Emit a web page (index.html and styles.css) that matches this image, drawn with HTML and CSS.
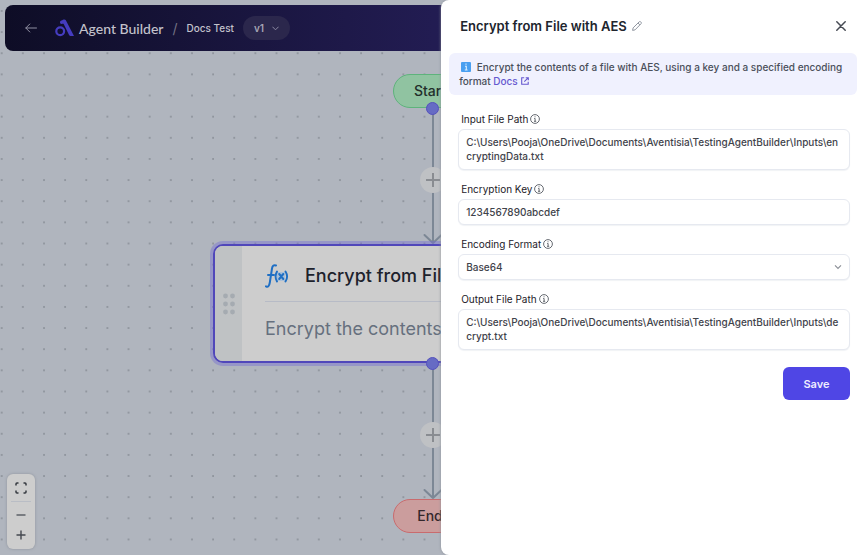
FILE: index.html
```html
<!DOCTYPE html>
<html lang="en">
<head>
<meta charset="utf-8">
<title>Agent Builder</title>
<meta name="viewport" content="width=device-width, initial-scale=1">
<link rel="stylesheet" href="styles.css">
</head>
<body>
<main class="canvas">
  <svg class="canvas-art" aria-hidden="true">
    <defs>
      <pattern id="dots" x="0.700" y="10" width="21.14" height="21.14" patternUnits="userSpaceOnUse">
        <circle cx="1" cy="1" r="0.9" fill="#858a93"/>
      </pattern>
    </defs>
    <rect width="100%" height="100%" fill="url(#dots)"/>
    <g fill="none" stroke="#7c8795" stroke-width="2" stroke-linecap="round" stroke-linejoin="round">
      <path d="M433 108V243M424.500 235L433 243L441.500 235"/>
      <path d="M433 363V498M424.500 490L433 498L441.500 490"/>
    </g>
    <g fill="#bfc1c4">
      <circle cx="433" cy="180" r="13"/>
      <circle cx="433" cy="435" r="13"/>
    </g>
    <path d="M426 180H440M433 173V187M426 435H440M433 428V442" stroke="#898c91" stroke-width="2"/>
  </svg>

  <div class="pill pill-start">Start</div>

  <article class="node">
    <div class="node-grip">
      <svg width="14" height="22" viewBox="0 0 14 22" fill="#a5abb1" aria-hidden="true">
        <circle cx="3.500" cy="3" r="2.400"/><circle cx="10.500" cy="3" r="2.400"/>
        <circle cx="3.500" cy="11" r="2.400"/><circle cx="10.500" cy="11" r="2.400"/>
        <circle cx="3.500" cy="19" r="2.400"/><circle cx="10.500" cy="19" r="2.400"/>
      </svg>
    </div>
    <div class="node-body">
      <div class="node-head">
        <svg width="24" height="24" viewBox="0 0 24 24" fill="none" stroke="#1f6fc4" stroke-linecap="round" aria-hidden="true">
          <rect x="12" y="8" width="8" height="9" fill="#a9c0d8" stroke="none"/>
          <path stroke-width="2" d="M11 1.500C8.500 .5 7.400 2 7 4.500L4.800 18.500C4.300 22 3 23.400 1 22.300M3 11H9"/>
          <path stroke-width="1.900" d="M12 7.500C10.300 10.500 10.300 14.500 12 17.500M20.500 7.500C22.400 10.500 22.400 14.500 20.500 17.500"/>
          <path stroke-width="2" d="M14.200 10L18.300 15M18.300 10L14.200 15"/>
        </svg>
        <h2>Encrypt from File with AES</h2>
      </div>
      <p>Encrypt the contents of a file with AES</p>
    </div>
  </article>

  <div class="pill pill-end">End</div>
  <span class="port port-start"></span>
  <span class="port port-node"></span>

  <div class="zoom-bar">
    <button type="button" aria-label="Fit view">
      <svg width="12" height="12" viewBox="0 0 12 12" fill="none" stroke="#34383f" stroke-width="1.500" aria-hidden="true"><path d="M1 3.500V2Q1 1 2 1H3.500M8.500 1H10Q11 1 11 2V3.500M11 8.500V10Q11 11 10 11H8.500M3.500 11H2Q1 11 1 10V8.500"/></svg>
    </button>
    <hr>
    <button type="button" aria-label="Zoom out">
      <svg width="10" height="10" viewBox="0 0 10 10" stroke="#555960" stroke-width="1.400" aria-hidden="true"><path d="M.5 5H9.500"/></svg>
    </button>
    <button type="button" aria-label="Zoom in">
      <svg width="10" height="10" viewBox="0 0 10 10" stroke="#44484f" stroke-width="1.400" aria-hidden="true"><path d="M.5 5H9.500M5 .5V9.500"/></svg>
    </button>
  </div>
</main>

<header class="topbar">
  <button type="button" class="back" aria-label="Back">
    <svg width="12" height="10" viewBox="0 0 12 10" fill="none" stroke="#8f8fa2" stroke-width="1" stroke-linecap="round" stroke-linejoin="round" aria-hidden="true"><path d="M11.500 5H.8M4.800 1L.8 5L4.800 9"/></svg>
  </button>
  <svg class="logo" width="20" height="18" viewBox="0 0 20 18" fill="none" aria-hidden="true">
    <circle cx="5.200" cy="12.200" r="3.900" stroke="#453cc0" stroke-width="2.200"/>
    <path fill="#453cc0" d="M5 3.300C5 1.700 6 1.300 7 1.400C7.600 .6 8.400 .5 9.300 .5C10.500 .5 11 1.300 11.500 2.500L19 17H16.200C15 17 14.400 16.600 13.800 15.400L8.800 5.200C8.300 4.400 7.500 5 6.700 5C5.500 5 5 4.400 5 3.300Z"/>
  </svg>
  <span class="brand">Agent Builder</span>
  <span class="slash">/</span>
  <span class="crumb">Docs Test</span>
  <button type="button" class="version">v1
    <svg width="7" height="5" viewBox="0 0 7 5" fill="none" stroke="#8d8aa3" stroke-linecap="round" stroke-linejoin="round" aria-hidden="true"><path d="M.7 1L3.500 3.800L6.300 1"/></svg>
  </button>
</header>

<aside class="drawer">
  <div class="drawer-head">
    <h1>Encrypt from File with AES</h1>
    <button type="button" class="edit" aria-label="Rename">
      <svg width="10" height="10" viewBox="0 0 10 10" fill="none" stroke="#858b96" stroke-width=".9" stroke-linejoin="round" aria-hidden="true"><path d="M.6 9.400L1.100 6.900L7 1C7.600 .4 8.300 .4 8.900 1C9.500 1.600 9.500 2.300 8.900 2.900L3 8.900ZM6 2L7.900 3.900"/></svg>
    </button>
    <button type="button" class="close" aria-label="Close">
      <svg width="10" height="10" viewBox="0 0 10 10" stroke="#474b54" stroke-width="1.500" stroke-linecap="round" aria-hidden="true"><path d="M.8 .8L9.200 9.200M9.200 .8L.8 9.200"/></svg>
    </button>
  </div>

  <p class="notice">
    <svg class="info-tile" width="10" height="10" viewBox="0 0 10 10" aria-hidden="true"><rect width="10" height="10" rx="1" fill="#499ff0"/><path d="M4 4.300H5.300V8M3.800 8H6.600M5 1.600V2.800" stroke="#dcefff" stroke-width="1.100" fill="none"/></svg>
    Encrypt the contents of a file with AES, using a key and a specified encoding format
    <a href="#docs">Docs <svg width="8" height="8" viewBox="0 0 8 8" fill="none" stroke="#6558cf" stroke-width="1.100" aria-hidden="true"><path d="M3.200 .8H.7V7.300H7.200V4.800M4.700 .7H7.300V3.300M7.100 .9L3.300 4.700"/></svg></a>
  </p>

  <form class="fields">
    <div class="field">
      <label for="input-path">Input File Path
        <svg width="10" height="10" viewBox="0 0 10 10" fill="none" stroke="#555961" stroke-width=".9" aria-hidden="true"><circle cx="5" cy="5" r="4.400"/><path d="M4.200 4.500H5.100V7.300M4 7.300H6.200M5 2.300V3.300"/></svg>
      </label>
      <textarea id="input-path" rows="2">C:\Users\Pooja\OneDrive\Documents\Aventisia\TestingAgentBuilder\Inputs\encryptingData.txt</textarea>
    </div>
    <div class="field">
      <label for="key">Encryption Key
        <svg width="10" height="10" viewBox="0 0 10 10" fill="none" stroke="#555961" stroke-width=".9" aria-hidden="true"><circle cx="5" cy="5" r="4.400"/><path d="M4.200 4.500H5.100V7.300M4 7.300H6.200M5 2.300V3.300"/></svg>
      </label>
      <input id="key" type="text" value="1234567890abcdef">
    </div>
    <div class="field">
      <label for="encoding">Encoding Format
        <svg width="10" height="10" viewBox="0 0 10 10" fill="none" stroke="#555961" stroke-width=".9" aria-hidden="true"><circle cx="5" cy="5" r="4.400"/><path d="M4.200 4.500H5.100V7.300M4 7.300H6.200M5 2.300V3.300"/></svg>
      </label>
      <div class="select-wrap">
        <select id="encoding"><option>Base64</option></select>
        <svg width="8" height="6" viewBox="0 0 8 6" fill="none" stroke="#8b8f96" stroke-width="1.100" aria-hidden="true"><path d="M1 1.300L4 4.400L7 1.300"/></svg>
      </div>
    </div>
    <div class="field">
      <label for="output-path">Output File Path
        <svg width="10" height="10" viewBox="0 0 10 10" fill="none" stroke="#555961" stroke-width=".9" aria-hidden="true"><circle cx="5" cy="5" r="4.400"/><path d="M4.200 4.500H5.100V7.300M4 7.300H6.200M5 2.300V3.300"/></svg>
      </label>
      <textarea id="output-path" rows="2">C:\Users\Pooja\OneDrive\Documents\Aventisia\TestingAgentBuilder\Inputs\decrypt.txt</textarea>
    </div>
    <button type="button" class="save">Save</button>
  </form>
</aside>
</body>
</html>
```
FILE: styles.css
```css
* {
  box-sizing: border-box;
}

body {
  margin: 0;
  height: 100vh;
  overflow: hidden;
  display: grid;
  grid-template-columns: 51fr 49fr;
  grid-template-rows: auto 1fr;
  font-family: Inter, "Liberation Sans", sans-serif;
  color: #30343c;
  background: #b0b5be;
}

button {
  font: inherit;
  color: inherit;
  background: none;
  border: 0;
  padding: 0;
  display: flex;
  align-items: center;
  justify-content: center;
}

h1, h2, p {
  margin: 0;
}

/* Flow canvas */
.canvas {
  position: absolute;
  inset: 0;
  overflow: hidden;
}

.canvas-art {
  display: block;
  width: 100%;
  height: 100%;
}

.pill {
  position: absolute;
  left: 393px;
  width: 74px;
  height: 34px;
  border-radius: 17px;
  font-size: 14px;
  font-weight: 500;
  line-height: 32px;
  text-align: center;
}

.pill-start {
  top: 74px;
  color: #222e2b;
  background: #90c3a1;
  border: 1px solid #5eb37c;
}

.pill-end {
  top: 499px;
  color: #34272b;
  background: #cb9d9d;
  border: 1px solid #c96b6e;
}

.port {
  position: absolute;
  left: 426px;
  width: 13px;
  height: 13px;
  border-radius: 50%;
  background: #666bc4;
  border: 1px solid #5450bd;
}

.port-start {
  top: 102px;
}

.port-node {
  top: 357px;
}

.node {
  position: absolute;
  left: 213px;
  top: 244px;
  width: 440px;
  display: flex;
  overflow: hidden;
  background: #cdcdcd;
  border: 2px solid #5047ba;
  border-radius: 10px;
  box-shadow: 0 0 0 3px rgb(112 105 212 / 40%);
}

.node-grip {
  display: flex;
  align-items: center;
  justify-content: center;
  width: 27px;
  background: #bfc2c4;
}

.node-body {
  flex: 1;
  padding: 0 23px;
}

.node-head {
  display: flex;
  align-items: center;
  gap: 16px;
  height: 56px;
  padding-top: 4px;
  border-bottom: 1px solid #b7bbc6;
}

.node-head h2 {
  font-size: 18px;
  font-weight: 500;
  line-height: 24px;
  color: #1d222c;
}

.node p {
  padding: 15px 0 20px;
  font-size: 18px;
  line-height: 24px;
  color: #66707e;
}

.zoom-bar {
  position: absolute;
  left: 7px;
  bottom: 6px;
  display: flex;
  flex-direction: column;
  width: 28px;
  padding: 4px;
  background: #cdcdcd;
  border-radius: 6px;
  box-shadow: 0 0 3px #8d929b;
}

.zoom-bar button {
  height: 20px;
}

.zoom-bar hr {
  width: 100%;
  margin: 3px 0;
  border: 0;
  border-top: 1px solid #b9bdc5;
}

/* Top bar */
.topbar {
  position: relative;
  grid-area: 1 / 1 / 2 / 3;
  display: flex;
  align-items: center;
  height: 46px;
  margin: 5px;
  padding-left: 20px;
  border-radius: 8px;
  background: linear-gradient(90deg, #0e0d26, #221c52 50%, #2c2470);
  color: #c3c2cc;
}

.logo {
  margin: 0 4px 0 18px;
}

.brand {
  font-family: Lato, sans-serif;
  font-size: 14px;
  font-weight: 500;
}

.slash {
  margin: 0 9px;
  font-size: 14px;
  color: #747284;
}

.crumb {
  font-size: 10px;
  font-weight: 500;
}

.version {
  gap: 8px;
  width: 47px;
  height: 24px;
  margin-left: 9px;
  border-radius: 12px;
  font-size: 10px;
  font-weight: 600;
  color: #a6a4b4;
  background: #2b274c;
}

/* Settings drawer */
.drawer {
  position: relative;
  grid-area: 1 / 2 / 3 / 3;
  min-height: 100vh;
  padding: 0 8px;
  background: #fff;
  border-radius: 8px 0 0 8px;
  box-shadow: 0 0 3px #8b909a;
}

.drawer-head {
  display: flex;
  align-items: center;
  height: 53px;
  padding: 0 11px 2px;
}

.drawer-head h1 {
  font-size: 13px;
  font-weight: 600;
  color: #20242d;
}

.edit {
  margin-left: 5px;
}

.close {
  margin-left: auto;
}

.notice {
  padding: 7px 8px 7px 10px;
  border-radius: 6px;
  background: #f0f1fe;
  font-size: 10px;
  font-weight: 500;
  line-height: 14px;
  color: #4a4f5a;
}

.info-tile {
  margin: 0 3px 0 2px;
  vertical-align: -1px;
}

.notice a {
  color: #6558cf;
  text-decoration: none;
}

.notice a svg {
  margin-left: 1px;
}

.fields {
  display: flex;
  flex-direction: column;
  gap: 9px;
  padding: 14px 7px 0 9px;
}

.field {
  display: flex;
  flex-direction: column;
}

.field label {
  display: flex;
  align-items: center;
  gap: 2px;
  height: 20px;
  padding-left: 3px;
  font-size: 10px;
  font-weight: 400;
  color: #1d2129;
}

.field textarea,
.field input,
.field select {
  display: block;
  width: 100%;
  height: 26px;
  margin: 0;
  padding: 0 7px;
  border: 1px solid #e6e9f0;
  border-radius: 6px;
  outline: 0;
  background: #fff;
  box-shadow: 0 1px 1px #f1f3f6;
  font-family: inherit;
  font-size: 10px;
  font-weight: 500;
  color: #3f434b;
  appearance: none;
}

.field textarea {
  height: auto;
  padding: 5px 8px 6px 7px;
  line-height: 14px;
  resize: none;
  overflow: hidden;
  word-break: break-all;
}

.select-wrap {
  display: grid;
  align-items: center;
}

.select-wrap > * {
  grid-area: 1 / 1;
}

.select-wrap svg {
  justify-self: end;
  margin-right: 8px;
  pointer-events: none;
}

.save {
  align-self: flex-end;
  width: 67px;
  height: 33px;
  margin-top: 8px;
  border-radius: 6px;
  background: #4f46e5;
  font-size: 11px;
  font-weight: 600;
  color: #eeedff;
}
```
